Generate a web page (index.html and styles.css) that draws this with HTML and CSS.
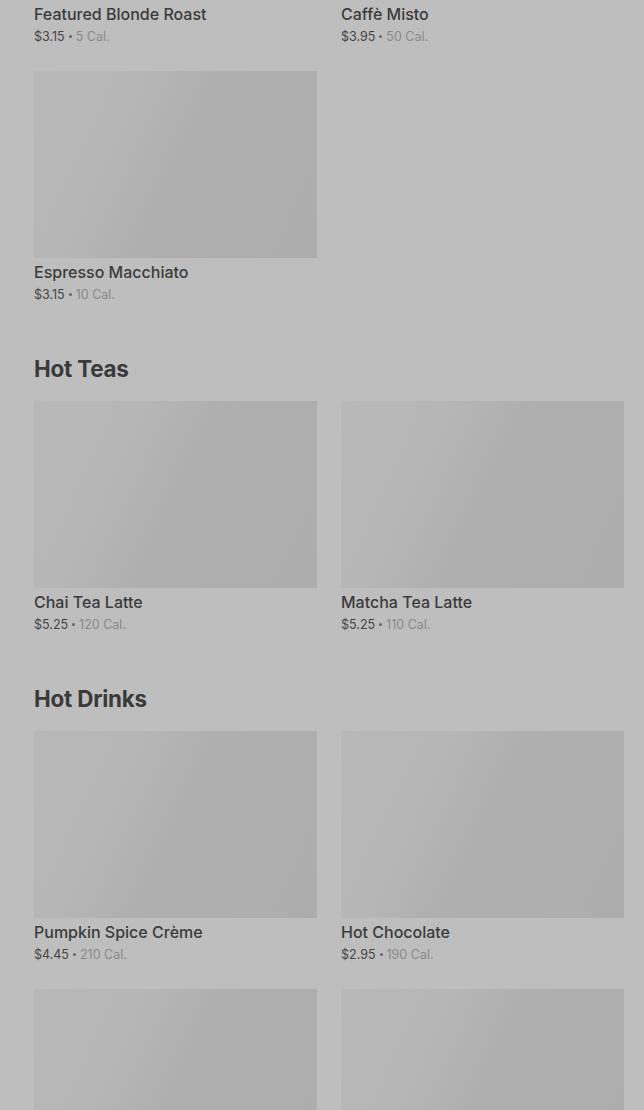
FILE: index.html
```html
<!DOCTYPE html>
<html lang="en">
<head>
  <meta charset="UTF-8" />
  <meta name="viewport" content="width=device-width, initial-scale=1.0"/>
  <title>Menu</title>
  <link rel="stylesheet" href="styles.css">
</head>
<body>

  <div class="menu">

    <div class="grid">
      <div class="item">
        <div class="thumb"></div>
        <div class="name">Featured Blonde Roast</div>
        <div class="meta"><span class="price">$3.15</span><span class="dot"></span><span class="cal">5 Cal.</span></div>
      </div>
      <div class="item">
        <div class="thumb"></div>
        <div class="name">Caffè Misto</div>
        <div class="meta"><span class="price">$3.95</span><span class="dot"></span><span class="cal">50 Cal.</span></div>
      </div>
      <div class="item">
        <div class="thumb"></div>
        <div class="name">Espresso Macchiato</div>
        <div class="meta"><span class="price">$3.15</span><span class="dot"></span><span class="cal">10 Cal.</span></div>
      </div>
    </div>

    <h2 class="section-title">Hot Teas</h2>
    <div class="grid">
      <div class="item">
        <div class="thumb"></div>
        <div class="name">Chai Tea Latte</div>
        <div class="meta"><span class="price">$5.25</span><span class="dot"></span><span class="cal">120 Cal.</span></div>
      </div>
      <div class="item">
        <div class="thumb"></div>
        <div class="name">Matcha Tea Latte</div>
        <div class="meta"><span class="price">$5.25</span><span class="dot"></span><span class="cal">110 Cal.</span></div>
      </div>
    </div>

    <h2 class="section-title">Hot Drinks</h2>
    <div class="grid">
      <div class="item">
        <div class="thumb"></div>
        <div class="name">Pumpkin Spice Crème</div>
        <div class="meta"><span class="price">$4.45</span><span class="dot"></span><span class="cal">210 Cal.</span></div>
      </div>
      <div class="item">
        <div class="thumb"></div>
        <div class="name">Hot Chocolate</div>
        <div class="meta"><span class="price">$2.95</span><span class="dot"></span><span class="cal">190 Cal.</span></div>
      </div>
      <div class="item">
        <div class="thumb"></div>
      </div>
      <div class="item">
        <div class="thumb"></div>
      </div>
    </div>

  </div>

</body>
</html>
```

FILE: styles.css
```css
body {
  font-family: Inter, "Noto Sans", sans-serif;
  background-color: #bebebe;
  margin: 0;
  padding: 0;
  overflow: hidden;
}

/* list is scrolled: first row of pictures is above the fold */
.menu {
  margin-top: -187px;
  padding: 0 20px 0 34px;
}

.grid {
  display: grid;
  grid-template-columns: 1fr 1fr;
  column-gap: 24px;
  row-gap: 24px;
}

.thumb {
  height: 187px;
  background: linear-gradient(115deg, #b8b8b8 0%, #b6b6b6 30%, #afafaf 50%, #adadad 100%);
}

.name {
  margin-top: 4px;
  font-size: 16px;
  line-height: 20px;
  font-weight: 500;
  color: #3b3b3b;
}

.meta {
  margin-top: 3px;
  height: 20px;
  font-size: 12.5px;
  line-height: 20px;
  color: #5a5a5a;
}

.price {
  color: #454545;
}

.dot {
  display: inline-block;
  width: 3px;
  height: 3px;
  margin: 0 4px 2px 4px;
  border-radius: 50%;
  background-color: #666;
  vertical-align: middle;
}

.cal {
  color: #8a8a8a;
}

.section-title {
  margin: 48px 0 16px 0;
  font-size: 22.4px;
  line-height: 32px;
  font-weight: 700;
  color: #3a3a3a;
  letter-spacing: -0.2px;
}
```
